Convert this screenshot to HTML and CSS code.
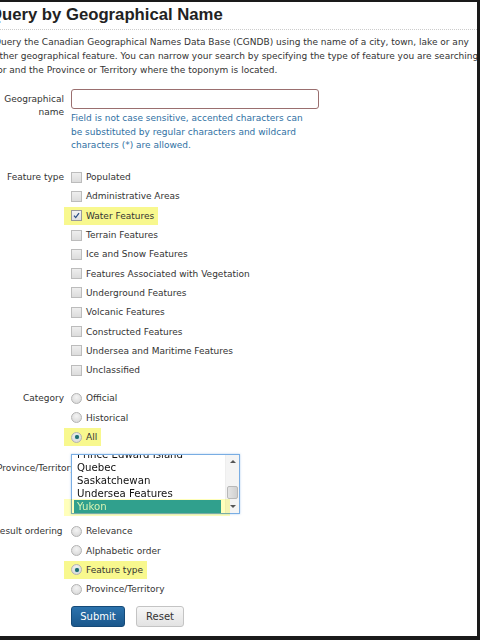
FILE: index.html
```html
<!DOCTYPE html>
<html lang="en">
<head>
<meta charset="utf-8">
<title>Query by Geographical Name</title>
<link rel="stylesheet" href="styles.css">
</head>
<body>
<div class="frame">
  <div class="page">
    <h1 class="title">Query by Geographical Name</h1>
    <p class="intro">Query the Canadian Geographical Names Data Base (CGNDB) using the name of a city, town, lake or any other geographical feature. You can narrow your search by specifying the type of feature you are searching for and the Province or Territory where the toponym is located.</p>

    <div class="form">
      <div class="row row-name">
        <div class="label">Geographical<br>name</div>
        <div class="ctl">
          <div class="textbox"></div>
          <p class="help">Field is not case sensitive, accented characters can be substituted by regular characters and wildcard characters (*) are allowed.</p>
        </div>
      </div>

      <div class="row row-feature">
        <div class="label lbl-opt">Feature type</div>
        <ul class="opts">
          <li class="opt"><span class="cb"></span>Populated</li>
          <li class="opt"><span class="cb"></span>Administrative Areas</li>
          <li class="opt"><span class="hl"><span class="cb on"><svg viewBox="0 0 10 10" width="9" height="9"><path d="M2.2 5.2 L4.1 7.3 L7.8 2.4" fill="none" stroke="#2b4f86" stroke-width="1.4"/></svg></span>Water Features</span></li>
          <li class="opt"><span class="cb"></span>Terrain Features</li>
          <li class="opt"><span class="cb"></span>Ice and Snow Features</li>
          <li class="opt"><span class="cb"></span>Features Associated with Vegetation</li>
          <li class="opt"><span class="cb"></span>Underground Features</li>
          <li class="opt"><span class="cb"></span>Volcanic Features</li>
          <li class="opt"><span class="cb"></span>Constructed Features</li>
          <li class="opt"><span class="cb"></span>Undersea and Maritime Features</li>
          <li class="opt"><span class="cb"></span>Unclassified</li>
        </ul>
      </div>

      <div class="row row-category">
        <div class="label lbl-opt">Category</div>
        <ul class="opts">
          <li class="opt"><span class="rb"></span>Official</li>
          <li class="opt"><span class="rb"></span>Historical</li>
          <li class="opt"><span class="hl"><span class="rb on"></span>All</span></li>
        </ul>
      </div>

      <div class="row row-prov">
        <div class="label lbl-prov">Province/Territory</div>
        <div class="ctl prov-ctl">
          <div class="listbox">
            <div class="items">
              <div class="item partial">Prince Edward Island</div>
              <div class="item">Quebec</div>
              <div class="item">Saskatchewan</div>
              <div class="item">Undersea Features</div>
              <div class="item sel">Yukon</div>
            </div>
            <div class="scrollbar">
              <span class="arrow up"></span>
              <span class="track"><span class="thumb"></span></span>
              <span class="arrow down"></span>
            </div>
          </div>
          <div class="mark"></div>
        </div>
      </div>

      <div class="row row-order">
        <div class="label lbl-opt lbl-wide">Result ordering</div>
        <ul class="opts">
          <li class="opt"><span class="rb"></span>Relevance</li>
          <li class="opt"><span class="rb"></span>Alphabetic order</li>
          <li class="opt"><span class="hl"><span class="rb on"></span>Feature type</span></li>
          <li class="opt"><span class="rb"></span>Province/Territory</li>
        </ul>
      </div>

      <div class="row row-buttons">
        <div class="label"></div>
        <div class="buttons">
          <button class="btn btn-primary" type="button">Submit</button>
          <button class="btn btn-default" type="button">Reset</button>
        </div>
      </div>
    </div>
  </div>
</div>
</body>
</html>
```

FILE: styles.css
```css
* { box-sizing: border-box; }
html, body { margin: 0; padding: 0; background: #fff; }
body {
  font-family: "DejaVu Sans", Verdana, sans-serif;
  font-size: 9px;
  color: #333;
}
.frame {
  width: 480px;
  height: 640px;
  border-top: 2px solid #1a1a1a;
  border-right: 3px solid #1a1a1a;
  border-bottom: 4px solid #1a1a1a;
  overflow: hidden;
  background: #fff;
}
.page {
  margin-left: -6px;
}
.title {
  font-family: "Liberation Sans", Arial, sans-serif;
  font-weight: bold;
  font-size: 16.7px;
  color: #222;
  margin: 0 0 0 -5px;
  padding: 3px 0 4px;
  line-height: 20px;
  border-bottom: 1px dotted #ccc;
}
.intro {
  margin: 5px 0 0;
  line-height: 14px;
  width: 494px;
}
.form { margin-top: 12px; }
.row {
  display: grid;
  grid-template-columns: 70px 1fr;
  column-gap: 7px;
}
.label {
  text-align: right;
  line-height: 13px;
  white-space: nowrap;
}
.row-name .label { padding-top: 4px; }
.textbox {
  width: 248px;
  height: 20px;
  border: 1px solid #9a6f6f;
  border-radius: 3px;
  background: #fff;
}
.help {
  margin: 3px 0 0;
  color: #2f70a3;
  line-height: 13.5px;
  width: 240px;
}
.opts { list-style: none; margin: 0; padding: 0; }
.opt {
  height: 19.3px;
  display: flex;
  align-items: center;
  white-space: nowrap;
}
.lbl-opt { line-height: 19.3px; }
.lbl-wide { direction: rtl; text-align: left; }
.row-feature { margin-top: 15px; }
.row-category { margin-top: 9px; }
.row-prov { margin-top: 7px; }
.row-order { margin-top: 8px; }
.row-buttons { margin-top: 7px; }
.hl {
  display: inline-flex;
  align-items: center;
  background: #f8f88e;
  margin-left: -7px;
  padding: 0 4px 0 7px;
  height: 18px;
}
.cb {
  display: inline-block;
  width: 11px;
  height: 11px;
  border: 1px solid #bcbcbc;
  background: linear-gradient(#eeeeee, #dcdcdc);
  margin-right: 4px;
  flex: none;
  position: relative;
}
.cb.on { background: linear-gradient(#f2f2f2, #e0e0e0); border-color: #9a9a9a; }
.cb svg { position: absolute; left: 0; top: 0; }
.rb {
  display: inline-block;
  width: 11px;
  height: 11px;
  border-radius: 50%;
  border: 1px solid #b3b3b3;
  background: radial-gradient(circle at 50% 35%, #f4f4f4, #d4d4d4);
  margin-right: 4px;
  flex: none;
  position: relative;
}
.rb.on::after {
  content: "";
  position: absolute;
  left: 2.5px;
  top: 2.5px;
  width: 4px;
  height: 4px;
  border-radius: 50%;
  background: #1f6b6e;
  box-shadow: 0 0 1px #3aa;
}
.lbl-prov {
  text-align: left;
  line-height: 13px;
  padding-top: 8px;
  padding-left: 3px;
  overflow: visible;
}
.prov-ctl { position: relative; z-index: 1; }
.listbox {
  width: 169px;
  height: 60px;
  border: 1px solid #79ade3;
  box-shadow: 0 0 2px rgba(121, 173, 227, 0.6);
  background: #fff;
  display: flex;
  overflow: hidden;
}
.items {
  flex: 1;
  padding: 0 2px;
  margin-top: -7px;
  font-size: 10.2px;
  color: #111;
}
.item {
  height: 13px;
  line-height: 13px;
  padding-left: 3px;
  white-space: nowrap;
}
.item.sel { background: #30a0c0; color: #d6f2f2; margin-right: 2px; }
.scrollbar {
  width: 14px;
  display: flex;
  flex-direction: column;
  background: #f4f4f4;
  border-left: 1px solid #eee;
}
.arrow {
  height: 13px;
  position: relative;
  flex: none;
}
.arrow::after {
  content: "";
  position: absolute;
  left: 4px;
  border-left: 3px solid transparent;
  border-right: 3px solid transparent;
}
.arrow.up::after { top: 5px; border-bottom: 3px solid #555; }
.arrow.down::after { top: 5px; border-top: 3px solid #555; }
.track { flex: 1; position: relative; }
.thumb {
  position: absolute;
  left: 1px;
  right: 1px;
  bottom: 1px;
  height: 13px;
  background: linear-gradient(90deg, #e4e4e4, #d0d0d0);
  border: 1px solid #b8b8b8;
  border-radius: 2px;
}
.mark {
  position: absolute;
  left: -7px;
  top: 45px;
  width: 166px;
  height: 17px;
  background: rgba(255, 255, 120, 0.5);
  mix-blend-mode: multiply;
  pointer-events: none;
}
.buttons { display: flex; gap: 11px; }
.btn {
  font-family: "DejaVu Sans", Verdana, sans-serif;
  font-size: 10px;
  height: 21px;
  padding: 0;
  border-radius: 3px;
  cursor: pointer;
}
.btn-primary {
  width: 54px;
  color: #fff;
  background: linear-gradient(#2c73ad, #1a578c);
  border: 1px solid #154a78;
}
.btn-default {
  width: 48px;
  color: #333;
  background: linear-gradient(#f7f7f7, #e3e3e3);
  border: 1px solid #c4c4c4;
}
```
